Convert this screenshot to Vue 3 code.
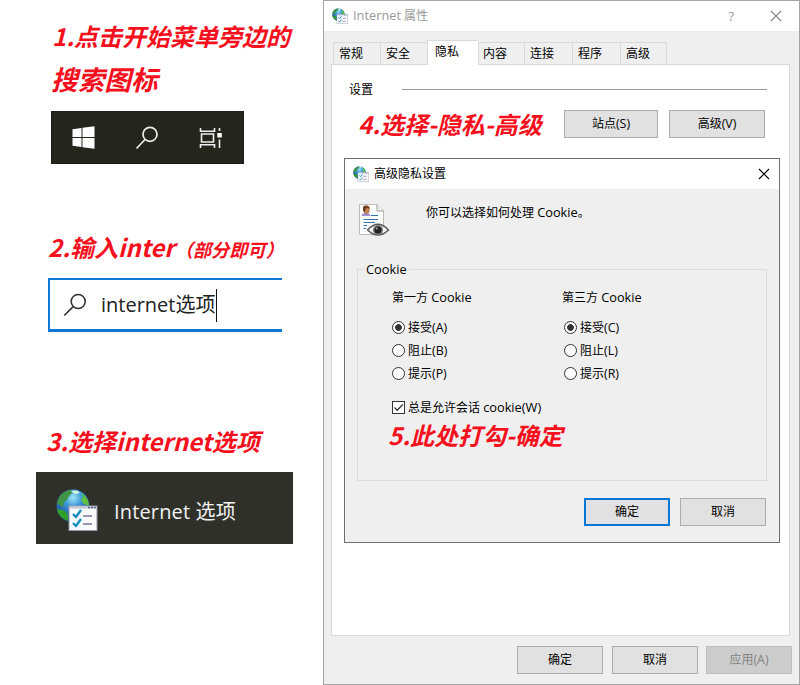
<script setup>
import { h } from 'vue'

const tabs = [
  { label: '常规', w: 47 },
  { label: '安全', w: 47 },
  { label: '隐私', w: 51, active: true },
  { label: '内容', w: 46 },
  { label: '连接', w: 48 },
  { label: '程序', w: 48 },
  { label: '高级', w: 47 },
]

const groups = [
  { name: '第一方', options: [['接受', '(A)'], ['阻止', '(B)'], ['提示', '(P)']] },
  { name: '第三方', options: [['接受', '(C)'], ['阻止', '(L)'], ['提示', '(R)']] },
]

const GlobeIcon = () =>
  h('svg', { viewBox: '0 0 42 42' }, [
    h('defs', [
      h('radialGradient', { id: 'sea', cx: '0.5', cy: '0.25', r: '0.75' }, [
        h('stop', { offset: '0', 'stop-color': '#a5e6fa' }),
        h('stop', { offset: '0.35', 'stop-color': '#3d9bd8' }),
        h('stop', { offset: '1', 'stop-color': '#12328a' }),
      ]),
    ]),
    h('circle', { cx: 17, cy: 17, r: 16.5, fill: 'url(#sea)' }),
    h('path', { d: 'M3 9C6 4 10 2 14 1L17 3L13 7L11 11L8 13L7 18L3 16L1 14Z', fill: '#3f9446' }),
    h('path', { d: 'M1 20L7 21L12 25L12 32C6 30 2 26 1 20Z', fill: '#2fa02c' }),
    h('path', { d: 'M25 4C30 7 33 11 33 17L28 15L25 11L27 8Z', fill: '#5fc13d' }),
    h('path', { d: 'M15 2L21 1.5L24 4L19 5Z', fill: '#d8f3dd' }),
    h('rect', { x: 13, y: 17, width: 28, height: 24.5, fill: '#f8f9fd', stroke: '#9296a6' }),
    h('path', { d: 'M13.5 18.5H40.5', stroke: '#c0c5d6', 'stroke-width': 2 }),
    h('path', { d: 'M32 18.5H34M35 18.5H37M38 18.5H40', stroke: '#59627d', 'stroke-width': 1.4 }),
    h('path', { d: 'M17 25L20 28L25 21M17 34L20 37L25 30', fill: 'none', stroke: '#168bbd', 'stroke-width': 2.3 }),
    h('path', { d: 'M27 27H36M27 35H36', stroke: '#7c7599', 'stroke-width': 1.6 }),
  ])
</script>

<template>
  <main class="page">
    <section class="guide">
      <h2 class="note first">1.点击开始菜单旁边的</h2>
      <h2 class="note second">搜索图标</h2>
      <div class="taskbar">
        <svg class="win" viewBox="0 0 23 23">
          <path d="M.5 3.2L9.5 2V11H.5ZM10.5 1.8L22.5.3V11H10.5ZM.5 12H9.5V21L.5 19.8ZM10.5 12H22.5V22.7L10.5 21.2Z" fill="#fff" />
        </svg>
        <svg class="lens" viewBox="0 0 24 24" fill="none" stroke="#eee" stroke-width="1.7">
          <circle cx="15" cy="8.3" r="7" /><path d="M10 13.5L1.5 22.5" />
        </svg>
        <svg class="tasks" viewBox="0 0 24 22" fill="none" stroke="#eee" stroke-width="1.6">
          <path d="M1.500 1V4.200H15.500V1M1.500 21V17.800H15.500V21M2.500 7H14.500V15H2.500ZM20.500 1V4M20.500 12.500V21" />
          <rect x="18.300" y="6" width="4.500" height="4.500" fill="#fff" stroke="none" />
        </svg>
      </div>
      <h2 class="note third">2.输入inter<small>（部分即可）</small></h2>
      <div class="search">
        <svg viewBox="0 0 24 24" fill="none" stroke="#333" stroke-width="1.6">
          <circle cx="15.2" cy="8.5" r="7" /><path d="M10.2 13.6L1.2 22.5" />
        </svg>
        <span>internet选项</span><i class="caret"></i>
      </div>
      <h2 class="note fourth">3.选择internet选项</h2>
      <div class="result"><GlobeIcon class="globe" /><span class="found">Internet 选项</span></div>
    </section>

    <section class="window">
      <header class="title">
        <GlobeIcon class="mini" /><span class="name"><span class="lat">Internet</span> 属性</span>
        <span class="help">?</span>
        <svg class="close" viewBox="0 0 12 12"><path d="M1 1L11 11M11 1L1 11" /></svg>
      </header>
      <nav class="tabs">
        <div v-for="t in tabs" :key="t.label" class="tab" :class="{ active: t.active }" :style="{ width: t.w + 'px' }">{{ t.label }}</div>
      </nav>
      <div class="panel">
        <div class="legend"><span>设置</span><hr /></div>
        <div class="actions">
          <h2 class="note">4.选择-隐私-高级</h2>
          <button class="site">站点<span class="key">(S)</span></button>
          <button class="adv">高级<span class="key">(V)</span></button>
        </div>
      </div>
      <footer class="bottom">
        <button>确定</button><button>取消</button><button class="off">应用<span class="key">(A)</span></button>
      </footer>

      <section class="dialog">
        <header class="dtitle">
          <GlobeIcon class="mini" /><span>高级隐私设置</span>
          <svg class="close" viewBox="0 0 12 12"><path d="M1 1L11 11M11 1L1 11" /></svg>
        </header>
        <div class="intro">
          <svg class="doc" viewBox="0 0 32 34">
            <path d="M1.5 1.5H19L25.5 8V31.5H1.5Z" fill="#fff" stroke="#bbb" />
            <path d="M19 1.5V8H25.5" fill="#eee" stroke="#999" />
            <path d="M3.5 13C4 10 6 10 8 10S12 10 12.5 13Z" fill="#a18ed0" />
            <ellipse cx="8.5" cy="6.8" rx="3.2" ry="4" fill="#bd8053" />
            <path d="M5 8V4C6 2 10 2 11.5 4L11 6C9 4 7 5 7 9Z" fill="#70401f" />
            <path d="M13 12.5H20M5.500 16.500H20M5.500 19.500H17M5.500 22.500H9M5.500 25.500H8" stroke="#3673ae" />
            <path d="M9.500 27Q20 15.500 30.500 27Q20 37 9.500 27Z" fill="#f1f1f1" stroke="#595959" stroke-width="1.400" />
            <circle cx="20" cy="27" r="5" fill="#777" /><circle cx="20" cy="27" r="3.500" fill="#222" />
            <circle cx="18.800" cy="25.500" r="1" fill="#aaa" />
          </svg>
          <p>你可以选择如何处理 <span class="lat">Cookie</span>。</p>
        </div>
        <fieldset>
          <legend class="lat">Cookie</legend>
          <div class="groups">
            <div v-for="g in groups" :key="g.name" class="group">
              <h3>{{ g.name }} <span class="lat">Cookie</span></h3>
              <div v-for="(o, i) in g.options" :key="o[0]" class="option">
                <i class="radio" :class="{ on: i === 0 }"></i><span>{{ o[0] }}<span class="key">{{ o[1] }}</span></span>
              </div>
            </div>
          </div>
          <div class="option session">
            <svg class="check" viewBox="0 0 13 13"><rect x=".5" y=".5" width="12" height="12" fill="#fff" stroke="#333" /><path d="M2.500 6.500L5.200 9.200L10.700 3.500" fill="none" stroke="#333" stroke-width="1.300" /></svg>
            <span>总是允许会话 <span class="lat">cookie(W)</span></span>
          </div>
          <h2 class="note fifth">5.此处打勾-确定</h2>
        </fieldset>
        <div class="confirm"><button class="primary">确定</button><button>取消</button></div>
      </section>
    </section>
  </main>
</template>

<style>
body { background: #fff; }
</style>
<style scoped>
* { box-sizing: border-box; }
.page { display: grid; grid-template-columns: 323px 477px; width: 800px; height: 685px; overflow: hidden; background: #fff; font: 12px/16px "Open Sans", "Noto Sans CJK SC", sans-serif; color: #000; }
h2, h3, p, hr { margin: 0; }
svg { display: block; flex: none; }
.note { font: italic bold 24px/36px "Noto Sans CJK SC", sans-serif; color: #f5101d; white-space: nowrap; }
.guide { display: flow-root; }
.first { margin: 18px 0 0 52px; }
.second { margin: 7px 0 0 51px; font-size: 26.7px; }
.taskbar { display: flex; align-items: center; width: 193px; height: 53px; margin: 14px 0 0 51px; background: #24251d; border: 1px solid #1c1d16; }
.win { width: 23px; height: 23px; margin-left: 20px; }
.lens { width: 24px; height: 24px; margin-left: 40px; }
.tasks { width: 24px; height: 22px; margin-left: 40px; }
.third { margin: 65px 0 0 48px; }
.third small { font-size: 18.2px; }
.search { display: flex; align-items: center; width: 234px; height: 54px; margin: 11px 0 0 48px; padding: 1px 0 0 13px; border: 2px solid #0f78d4; border-bottom-width: 3px; border-right: 0; font-size: 20px; line-height: 30px; color: #222; }
.search svg { width: 24px; height: 24px; margin-right: 14px; }
.caret { width: 1px; height: 33px; margin-left: 1px; background: #111; }
.fourth { margin: 91px 0 0 46px; }
.result { display: flex; align-items: center; width: 257px; height: 72px; margin: 13px 0 0 36px; padding-left: 20px; background: #2f3029; font-size: 20px; line-height: 30px; color: #f2f2f2; }
.globe { width: 42px; height: 42px; margin: 4px 16px 0 0; }
.found { padding-top: 7px; letter-spacing: .15px; }
.window { position: relative; display: flex; flex-direction: column; border: 1px solid #a5a5a5; background: #efefef; }
.title { display: flex; align-items: center; height: 30px; padding: 0 17px 0 8px; background: #fff; color: #999; }
.mini { width: 16px; height: 16px; margin-right: 5px; }
.lat { font-size: 12.8px; line-height: 14px; }
.key { font-size: 12.4px; line-height: 14px; }
.help { margin: 0 36px 0 auto; font-size: 13px; }
.close { width: 12px; height: 12px; fill: none; stroke: #888; stroke-width: 1.1; }
.tabs { display: flex; align-items: flex-end; height: 33px; padding-left: 9px; }
.tab { height: 22px; padding: 3px 0 0 5px; border: 1px solid #d9d9d9; border-right: 0; border-bottom: 0; }
.tab:last-child { border-right: 1px solid #d9d9d9; }
.tab.active { z-index: 1; height: 25px; margin-bottom: -1px; padding: 3px 0 0 7px; background: #fff; }
.tab.active + .tab { padding-left: 4px; }
.panel { width: 459px; height: 572px; margin-left: 7px; border: 1px solid #d9d9d9; background: #fff; }
.legend { display: flex; align-items: center; margin: 16px 22px 0 17px; height: 17px; }
.legend hr { width: 365px; height: 1px; margin-left: auto; border: 0; background: #999; }
.actions { display: flex; align-items: center; margin: 8px 24px 0 26px; height: 36px; }
button { width: 86px; height: 28px; padding: 0 0 1px; border: 1px solid #adadad; border-radius: 0; background: #e1e1e1; font: inherit; color: #000; }
.site { width: 94px; margin-left: auto; }
.adv { width: 96px; margin-left: 11px; }
.bottom { display: flex; gap: 9px; margin: 10px 0 0 193px; }
.off { margin-left: -1px; background: #ccc; border-color: #bfbfbf; color: #838383; }
.dialog { position: absolute; left: 20px; top: 157px; width: 436px; height: 385px; border: 1px solid #6e6e6e; background: #efefef; }
.dtitle { display: flex; align-items: center; height: 30px; padding: 0 9px 0 8px; background: #fff; }
.dtitle .close { margin-left: auto; stroke: #000; }
.intro { display: flex; height: 72px; padding: 14px 0 0 13px; }
.doc { width: 32px; height: 34px; }
.intro p { margin: 2px 0 0 36px; }
fieldset { height: 220px; width: 410px; margin: 0 0 0 12px; padding: 0; border: 1px solid #dcdcdc; }
legend { height: 16px; margin-left: 6px; padding: 1px 2px 0; }
.groups { display: flex; padding: 13px 0 0 34px; }
.group { width: 172px; }
h3 { height: 16px; margin-bottom: 10px; font: inherit; }
.group + .group h3 { margin-left: -2px; }
.option { display: flex; align-items: center; height: 23px; gap: 3px; }
.radio { width: 13px; height: 13px; border: 1px solid #333; border-radius: 50%; background: #fff; }
.radio.on { background: radial-gradient(circle, #333 0 3px, #fff 3.7px); }
.session { margin: 11px 0 0 34px; }
.check { width: 13px; height: 13px; }
.fifth { margin: -2px 0 0 30px; }
.confirm { display: flex; gap: 10px; margin: 17px 0 0 239px; }
.primary { border: 2px solid #0078d7; }
</style>
